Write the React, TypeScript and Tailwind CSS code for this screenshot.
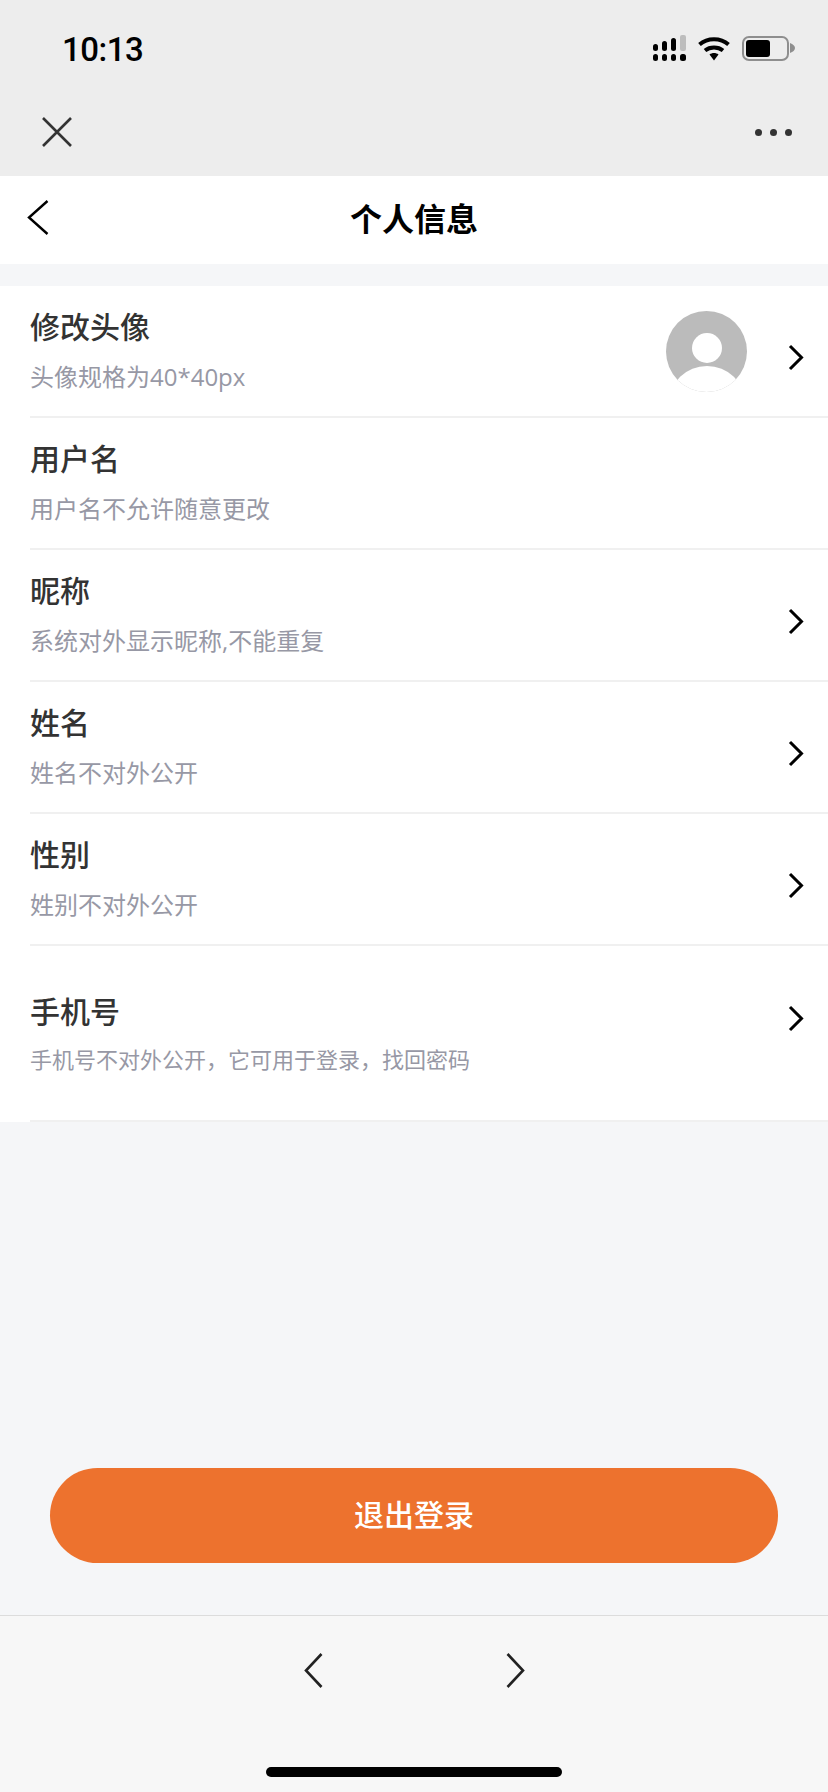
const cjk = "font-['Inter','Noto_Sans_CJK_SC',sans-serif]"
const subFont = "font-['Open_Sans','Noto_Sans_CJK_SC',sans-serif]"

const rows = [
  { title: '修改头像', sub: '头像规格为40*40px', avatar: true, arrow: true },
  { title: '用户名', sub: '用户名不允许随意更改', arrow: false },
  { title: '昵称', sub: '系统对外显示昵称,不能重复', arrow: true },
  { title: '姓名', sub: '姓名不对外公开', arrow: true },
  { title: '性别', sub: '姓别不对外公开', arrow: true },
]

const Chevron = ({ className = '' }: { className?: string }) => (
  <svg width="16" height="27" viewBox="0 0 16 27" fill="none" className={className}>
    <path d="M2 2l11.5 11.5L2 25" stroke="#000" strokeWidth="3" />
  </svg>
)

const StatusIcons = () => (
  <div className="flex items-center">
    <svg width="33" height="26" viewBox="0 0 33 26" fill="#000">
      <rect x="0" y="9" width="5" height="7" rx="2.5" />
      <rect x="9" y="6" width="5" height="10" rx="2.5" />
      <rect x="18" y="3" width="5" height="13" rx="2.5" />
      <rect x="27" y="0" width="6" height="16" rx="2" fill="#bdbdbd" />
      <rect x="0" y="19" width="5" height="7" rx="2.5" />
      <rect x="9" y="19" width="5" height="7" rx="2.5" />
      <rect x="18" y="19" width="5" height="7" rx="2.5" />
      <rect x="27" y="19" width="6" height="7" rx="2.5" />
    </svg>
    <svg width="32" height="25" viewBox="0 0 32 25" fill="none" className="ml-3">
      <path d="M1.5 8.5C9.5 1.5 22.5 1.5 30.5 8.5" stroke="#000" strokeWidth="4" />
      <path d="M7 14.5C12 10.5 20 10.5 25 14.5" stroke="#000" strokeWidth="4" />
      <path d="M11.5 18.5L16 24.5l4.5-6C18 16.5 14 16.5 11.5 18.5z" fill="#000" />
    </svg>
    <div className="ml-3 flex items-center">
      <div className="flex h-[25px] w-[47px] items-center rounded-[7px] border-2 border-[#8e8e8e] p-[2px]">
        <div className="h-[17px] w-[24px] rounded-[3px] bg-black" />
      </div>
      <svg width="6" height="10" viewBox="0 0 6 10" className="ml-[1px]">
        <path d="M0 0c3 1 5 3 5 5s-2 4-5 5z" fill="#8e8e8e" />
      </svg>
    </div>
  </div>
)

const Avatar = () => (
  <svg width="81" height="81" viewBox="0 0 81 81" className="mr-[41px] mt-[25px] shrink-0">
    <defs>
      <clipPath id="avatar-clip">
        <circle cx="40.5" cy="40.5" r="40.5" />
      </clipPath>
    </defs>
    <circle cx="40.5" cy="40.5" r="40.5" fill="#bbbbbb" />
    <circle cx="41" cy="37" r="15" fill="#fff" />
    <ellipse cx="41" cy="92" rx="38" ry="37" fill="#fff" clipPath="url(#avatar-clip)" />
  </svg>
)

export default function App() {
  return (
    <div className={`flex h-[1792px] w-[828px] flex-col overflow-hidden bg-[#f5f6f8] ${cjk}`}>
      {/* wechat chrome */}
      <div className="flex h-[176px] shrink-0 flex-col bg-[#ededed]">
        <div className="flex h-[98px] items-start justify-between pl-[62px] pr-[32px] pt-[35px]">
          <span className="font-['Roboto',sans-serif] text-[33px] font-medium leading-[29px] tracking-[-0.5px] text-black">10:13</span>
          <StatusIcons />
        </div>
        <div className="flex items-start justify-between pl-[42px] pr-[36px] pt-[19px]">
          <svg width="30" height="30" viewBox="0 0 30 30" fill="none">
            <path d="M1 1l28 28M29 1L1 29" stroke="#333" strokeWidth="2.6" />
          </svg>
          <div className="mt-[12px] flex gap-[8px]">
            <span className="h-[7px] w-[7px] rounded-full bg-[#333]" />
            <span className="h-[7px] w-[7px] rounded-full bg-[#333]" />
            <span className="h-[7px] w-[7px] rounded-full bg-[#333]" />
          </div>
        </div>
      </div>

      {/* page header */}
      <div className="relative flex h-[88px] shrink-0 items-center justify-center bg-white">
        <svg width="22" height="35" viewBox="0 0 22 35" fill="none" className="absolute left-[27px] top-[24px]">
          <path d="M20.5 1L2 17.5 20.5 34" stroke="#000" strokeWidth="2.4" />
        </svg>
        <h1 className="text-[32px] font-bold leading-none text-black">个人信息</h1>
      </div>

      {/* list */}
      <div className="mt-[22px] shrink-0 bg-white">
        {rows.map((row) => (
          <div key={row.title} className="ml-[30px] flex h-[132px] items-start border-b-2 border-[#f0f0f0]">
            <div className="flex-1 pt-[20px]">
              <div className="text-[30px] font-medium leading-[42px] text-[#333]">{row.title}</div>
              <div className={`mt-[11px] text-[24px] leading-[36px] text-[#9798a5] ${subFont}`}>{row.sub}</div>
            </div>
            {row.avatar && <Avatar />}
            {row.arrow && <Chevron className="mr-[24px] mt-[58px] shrink-0" />}
          </div>
        ))}
        <div className="ml-[30px] flex h-[176px] items-start border-b-2 border-[#f0f0f0]">
          <div className="flex-1 pt-[45px]">
            <div className="text-[30px] font-medium leading-[42px] text-[#333]">手机号</div>
            <div className="mt-[9px] text-[22px] leading-[36px] text-[#9798a5]">手机号不对外公开，它可用于登录，找回密码</div>
          </div>
          <Chevron className="mr-[24px] mt-[59px] shrink-0" />
        </div>
      </div>

      {/* logout */}
      <div className="flex flex-1 flex-col justify-end px-[50px] pb-[52px]">
        <button className="h-[95px] w-full rounded-[48px] bg-[#ed722e] text-[30px] font-medium text-white">退出登录</button>
      </div>

      {/* browser toolbar */}
      <div className="flex h-[177px] shrink-0 flex-col items-center border-t border-[#dcdcdc] bg-[#f7f7f7]">
        <div className="mt-[37px] flex gap-[183px]">
          <svg width="19" height="35" viewBox="0 0 19 35" fill="none">
            <path d="M17.5 1L2 17.5 17.5 34" stroke="#222" strokeWidth="2.6" />
          </svg>
          <svg width="19" height="35" viewBox="0 0 19 35" fill="none">
            <path d="M1.5 1L17 17.5 1.5 34" stroke="#222" strokeWidth="2.6" />
          </svg>
        </div>
        <div className="mt-[79px] h-[10px] w-[296px] rounded-full bg-black" />
      </div>
    </div>
  )
}
